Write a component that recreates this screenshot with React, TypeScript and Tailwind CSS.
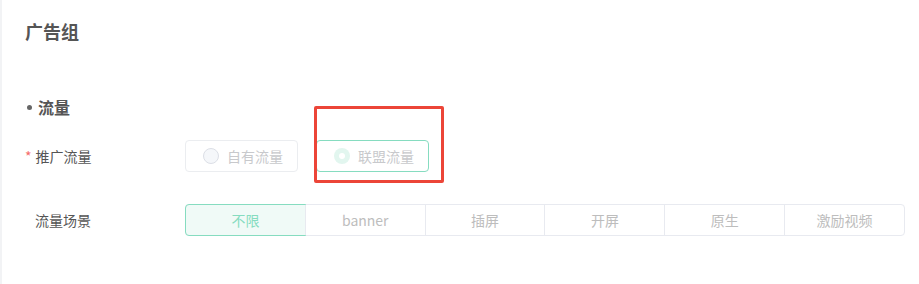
import React from 'react';

const scenes = ['不限', 'banner', '插屏', '开屏', '原生', '激励视频'];

export default function App() {
  return (
    <div
      className="relative h-[284px] w-[919px] overflow-hidden border-l-2 border-[#f2f3f5] bg-white"
      style={{ fontFamily: '"Noto Sans CJK SC", "Noto Sans", sans-serif' }}
    >
      {/* Header */}
      <div className="pl-[23px] pt-[18px] text-[18px] font-bold leading-[26px] text-[#555]">广告组</div>

      {/* Section title */}
      <div className="mt-[50px] flex items-center pl-[25px] text-[16px] font-bold leading-[26px] text-[#555]">
        <span className="mr-[6px] h-[5px] w-[5px] rounded-full bg-[#666]" />
        流量
      </div>

      {/* 推广流量 */}
      <div className="mt-[20px] flex items-center">
        <div className="w-[183px] pl-[23px] text-[14px] text-[#555]">
          <span className="mr-[4px] text-[#f56c6c]">*</span>推广流量
        </div>
        <div className="flex gap-[18px]">
          <div className="flex h-[32px] w-[113px] items-center gap-[8px] rounded-[4px] border border-[#ebedf0] pl-[17px]">
            <span className="h-[16px] w-[16px] rounded-full border border-[#dcdfe6] bg-[#f5f7fa]" />
            <span className="text-[14px] text-[#c8c9cc]">自有流量</span>
          </div>
          <div className="flex h-[32px] w-[113px] items-center gap-[8px] rounded-[4px] border border-[#86dcc0] pl-[17px]">
            <span className="flex h-[16px] w-[16px] items-center justify-center rounded-full bg-[#e2f6ef]">
              <span className="h-[6px] w-[6px] rounded-full bg-white" />
            </span>
            <span className="text-[14px] text-[#c8c9cc]">联盟流量</span>
          </div>
        </div>
      </div>

      {/* 流量场景 */}
      <div className="mt-[32px] flex items-center">
        <div className="w-[183px] pl-[33px] text-[14px] text-[#555]">流量场景</div>
        <div className="flex h-[32px] w-[720px] rounded-[4px] border border-[#e8eaf0]">
          {scenes.map((s, i) =>
            i === 0 ? (
              <div
                key={s}
                className="-m-px flex h-[32px] w-[121px] items-center justify-center rounded-l-[4px] border border-[#86dcc0] bg-[#f0faf7] text-[14px] text-[#86dcc0]"
              >
                {s}
              </div>
            ) : (
              <div
                key={s}
                className="flex w-[120px] items-center justify-center border-l border-[#e8eaf0] text-[14px] text-[#bdbdbd]"
              >
                {s}
              </div>
            )
          )}
        </div>
      </div>

      {/* annotation box */}
      <div className="absolute left-[312px] top-[106px] h-[77px] w-[130px] rounded-[2px] border-[3px] border-[#ec4538]" />
    </div>
  );
}
